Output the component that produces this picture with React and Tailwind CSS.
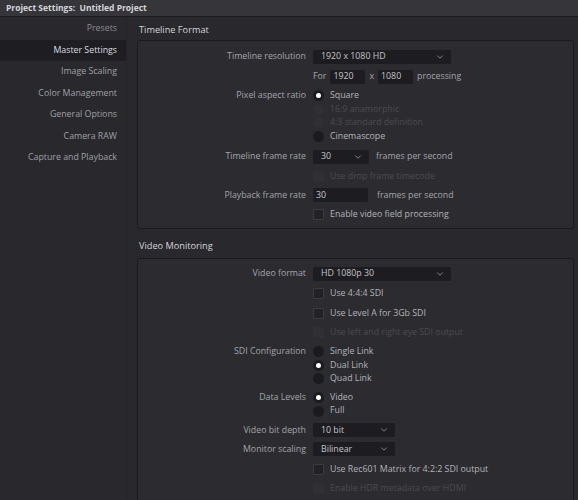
import { ChevronDown } from 'lucide-react'

const sidebarItems = [
  { label: 'Presets', tone: 'text-[#8c8c90]' },
  { label: 'Master Settings', active: true },
  { label: 'Image Scaling' },
  { label: 'Color Management' },
  { label: 'General Options' },
  { label: 'Camera RAW' },
  { label: 'Capture and Playback' },
]

function Row({ label, h = 'h-[19.5px]', children }) {
  return (
    <div className={`flex items-center ${h}`}>
      <div className="w-[168px] shrink-0 text-right text-[#a4a4a8]">{label}</div>
      <div className="ml-[7px] flex items-center">{children}</div>
    </div>
  )
}

function Select({ value, w }) {
  return (
    <div className={`flex h-[14px] items-center justify-between rounded-[2px] bg-[#1d1d21] pl-[8px] pr-[6px] text-[#c4c4c8] ${w}`}>
      <span>{value}</span>
      <ChevronDown size={10} strokeWidth={2} className="text-[#9a9a9e]" />
    </div>
  )
}

function Field({ value, w }) {
  return (
    <div className={`flex h-[14px] items-center rounded-[2px] bg-[#1d1d21] pl-[3px] text-[#c4c4c8] ${w}`}>{value}</div>
  )
}

function Check({ label, disabled }) {
  return (
    <div className="flex items-center">
      <div
        className={
          disabled
            ? 'h-[11px] w-[11px] rounded-[1px] bg-[#2f2f34]'
            : 'h-[11px] w-[11px] rounded-[1px] border border-[#3c3c41] bg-[#222226]'
        }
      />
      <span className={`ml-[6px] ${disabled ? 'text-[#4c4c51]' : 'text-[#b4b4b8]'}`}>{label}</span>
    </div>
  )
}

function Radio({ label, checked, disabled }) {
  return (
    <div className="flex h-[13.6px] items-center">
      <div
        className={`flex h-[11px] w-[11px] items-center justify-center rounded-full ${
          disabled ? 'bg-[#2f2f34]' : 'bg-[#1b1b1f]'
        }`}
      >
        {checked && <div className="h-[5px] w-[5px] rounded-full bg-white" />}
      </div>
      <span className={`ml-[6px] ${disabled ? 'text-[#4c4c51]' : 'text-[#b4b4b8]'}`}>{label}</span>
    </div>
  )
}

function RadioGroup({ label, items, className }) {
  return (
    <div className={`flex ${className}`}>
      <div className="flex h-[13.6px] w-[168px] shrink-0 items-center justify-end text-[#a4a4a8]">{label}</div>
      <div className="ml-[7px] flex flex-col">
        {items.map((it) => (
          <Radio key={it.label} {...it} />
        ))}
      </div>
    </div>
  )
}

export default function App() {
  return (
    <div className="flex h-[500px] w-[578px] flex-col overflow-hidden bg-[#28282d] font-['Open_Sans',sans-serif] text-[8.8px]">
      <div className="flex h-[17px] shrink-0 items-center border-b border-[#1c1c20] bg-[#35353a] pl-[6px] pt-[1px] text-[8.5px] font-bold text-[#d6d6da]">
        Project Settings:&nbsp; Untitled Project
      </div>

      <div className="flex min-h-0 flex-1">
        <div className="w-[127px] shrink-0 border-r border-[#242428] bg-[#28282d] pt-[1px]">
          {sidebarItems.map((item) => (
            <div
              key={item.label}
              className={`flex h-[21.5px] items-center justify-end pr-[9px] ${
                item.active ? 'bg-[#1e1e22] text-[#dcdce0]' : item.tone || 'text-[#a0a0a4]'
              }`}
            >
              {item.label}
            </div>
          ))}
        </div>

        <div className="flex-1 pl-[10px] pr-[4px]">
          <div className="flex h-[23px] items-center pl-[2px] pt-[2px] text-[9.2px] text-[#d4d4d8]">Timeline Format</div>
          <div className="rounded-[3px] border border-[#1b1b1e] bg-[#2b2b30] pb-[4.5px] pt-[5.5px]">
            <Row label="Timeline resolution" h="h-[20px]">
              <Select value="1920 x 1080 HD" w="w-[138px]" />
            </Row>
            <Row label="" h="h-[20px]">
              <span className="text-[#a4a4a8]">For</span>
              <Field value="1920" w="ml-[4px] w-[35px]" />
              <span className="ml-[4px] text-[#a4a4a8]">x</span>
              <Field value="1080" w="ml-[4px] w-[35px]" />
              <span className="ml-[4px] text-[#a4a4a8]">processing</span>
            </Row>
            <RadioGroup
              label="Pixel aspect ratio"
              className="pb-[3.5px] pt-[2.5px]"
              items={[
                { label: 'Square', checked: true },
                { label: '16:9 anamorphic', disabled: true },
                { label: '4:3 standard definition', disabled: true },
                { label: 'Cinemascope' },
              ]}
            />
            <Row label="Timeline frame rate" h="h-[20px]">
              <Select value="30" w="w-[56px]" />
              <span className="ml-[7px] text-[#a4a4a8]">frames per second</span>
            </Row>
            <Row label="" h="h-[19px]">
              <Check label="Use drop frame timecode" disabled />
            </Row>
            <Row label="Playback frame rate" h="h-[19px]">
              <Field value="30" w="w-[55px]" />
              <span className="ml-[9px] text-[#a4a4a8]">frames per second</span>
            </Row>
            <Row label="" h="h-[19px]">
              <Check label="Enable video field processing" />
            </Row>
          </div>

          <div className="flex h-[29px] items-center pl-[2px] pt-[5px] text-[9.2px] text-[#d4d4d8]">Video Monitoring</div>
          <div className="rounded-[3px] border border-[#1b1b1e] bg-[#2b2b30] pb-[6px] pt-[4.5px]">
            <Row label="Video format" h="h-[20px]">
              <Select value="HD 1080p 30" w="w-[138px]" />
            </Row>
            <Row label="" h="h-[19.5px]">
              <Check label="Use 4:4:4 SDI" />
            </Row>
            <Row label="" h="h-[19.5px]">
              <Check label="Use Level A for 3Gb SDI" />
            </Row>
            <Row label="" h="h-[19px]">
              <Check label="Use left and right eye SDI output" disabled />
            </Row>
            <RadioGroup
              label="SDI Configuration"
              className="pt-[3px]"
              items={[
                { label: 'Single Link' },
                { label: 'Dual Link', checked: true },
                { label: 'Quad Link' },
              ]}
            />
            <RadioGroup
              label="Data Levels"
              className="pt-[5px]"
              items={[{ label: 'Video', checked: true }, { label: 'Full' }]}
            />
            <div className="h-[3px]" />
            <Row label="Video bit depth" h="h-[19px]">
              <Select value="10 bit" w="w-[82px]" />
            </Row>
            <Row label="Monitor scaling" h="h-[19px]">
              <Select value="Bilinear" w="w-[82px]" />
            </Row>
            <Row label="" h="h-[20.5px]">
              <Check label="Use Rec601 Matrix for 4:2:2 SDI output" />
            </Row>
            <Row label="" h="h-[19px]">
              <Check label="Enable HDR metadata over HDMI" disabled />
            </Row>
          </div>
        </div>
      </div>
    </div>
  )
}
